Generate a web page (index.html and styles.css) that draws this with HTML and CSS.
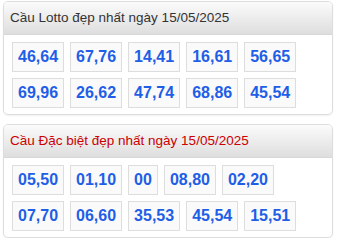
FILE: index.html
```html
<!DOCTYPE html>
<html lang="vi">
<head>
<meta charset="utf-8">
<link rel="stylesheet" href="styles.css">
</head>
<body>
<div class="page">
  <section class="card">
    <h2 class="card-title">Cầu Lotto đẹp nhất ngày 15/05/2025</h2>
    <div class="nums">
      <span class="num">46,64</span>
      <span class="num">67,76</span>
      <span class="num">14,41</span>
      <span class="num">16,61</span>
      <span class="num">56,65</span>
      <span class="num">69,96</span>
      <span class="num">26,62</span>
      <span class="num">47,74</span>
      <span class="num">68,86</span>
      <span class="num">45,54</span>
    </div>
  </section>
  <section class="card">
    <h2 class="card-title red">Cầu Đặc biệt đẹp nhất ngày 15/05/2025</h2>
    <div class="nums">
      <span class="num">05,50</span>
      <span class="num">01,10</span>
      <span class="num">00</span>
      <span class="num">08,80</span>
      <span class="num">02,20</span>
      <span class="num">07,70</span>
      <span class="num">06,60</span>
      <span class="num">35,53</span>
      <span class="num">45,54</span>
      <span class="num">15,51</span>
    </div>
  </section>
</div>
</body>
</html>
```

FILE: styles.css
```css
html, body {
  margin: 0;
  padding: 0;
  background: #fff;
}
.page {
  padding: 1px 4px 0 3px;
  display: flex;
  flex-direction: column;
  gap: 9px;
  font-family: "Liberation Sans", Arial, sans-serif;
}
.card {
  border: 1px solid #ddd;
  border-radius: 5px;
  overflow: hidden;
  box-shadow: 0 1px 2px rgba(0,0,0,0.06);
}
.card-title {
  margin: 0;
  height: 32px;
  line-height: 32px;
  padding: 0 6px;
  font-size: 13.5px;
  font-weight: normal;
  color: #333;
  background: linear-gradient(to bottom, #fbfbfb 0%, #dedede 100%);
  border-bottom: 1px solid #d8d8d8;
}
.card-title.red {
  color: #cc0000;
}
.nums {
  display: flex;
  flex-wrap: wrap;
  gap: 6px;
  padding: 7px 8px 6px 8px;
  width: 300px;
}
.num {
  border: 1px solid #ddd;
  background: #fafafa;
  padding: 5px;
  font-size: 16px;
  line-height: 18px;
  font-weight: bold;
  color: #1f5ee6;
}
```
